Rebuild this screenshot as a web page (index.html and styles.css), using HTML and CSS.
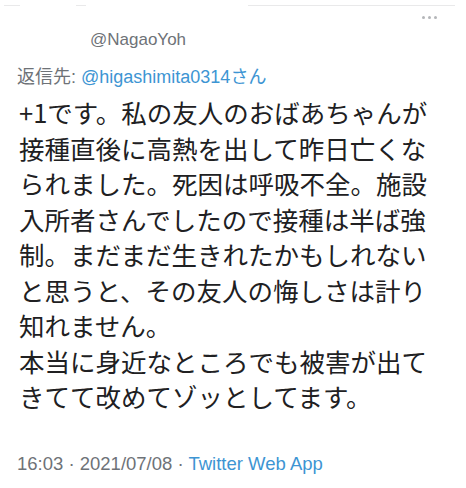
FILE: index.html
```html
<!DOCTYPE html>
<html lang="ja">
<head>
<meta charset="utf-8">
<link rel="stylesheet" href="styles.css">
</head>
<body>
<div class="tweet">
  <div class="topbar">
    <span class="seg seg1"></span>
    <span class="seg seg2"></span>
    <span class="seg seg3"></span>
  </div>
  <div class="menu"><span></span><span></span><span></span></div>
  <div class="handle">@NagaoYoh</div>
  <div class="reply">返信先: <span class="link">@higashimita0314さん</span></div>
  <div class="body">+1です。私の友人のおばあちゃんが<br>接種直後に高熱を出して昨日亡くな<br>られました。死因は呼吸不全。施設<br>入所者さんでしたので接種は半ば強<br>制。まだまだ生きれたかもしれない<br>と思うと、その友人の悔しさは計り<br>知れません。<br>本当に身近なところでも被害が出て<br>きてて改めてゾッとしてます。</div>
  <div class="meta">16:03 · 2021/07/08 · <span class="link">Twitter Web App</span></div>
</div>
</body>
</html>
```

FILE: styles.css
```css
html, body {
  margin: 0;
  padding: 0;
  background: #ffffff;
}
body {
  width: 466px;
  height: 488px;
  overflow: hidden;
  font-family: "Liberation Sans", "Noto Sans CJK JP", sans-serif;
}
.tweet {
  position: relative;
  display: flex;
  flex-direction: column;
  padding: 0 0 0 17px;
}
.topbar {
  position: relative;
  height: 7px;
  margin-left: -17px;
}
.seg {
  position: absolute;
  top: 5px;
  height: 1px;
  background: #e9e9ea;
}
.seg1 { left: 4px; width: 16px; }
.seg2 { left: 76px; width: 10px; }
.seg3 { left: 248px; width: 207px; }
.menu {
  position: absolute;
  top: 16px;
  right: 29px;
  display: flex;
  gap: 3px;
}
.menu span {
  width: 3px;
  height: 3px;
  border-radius: 50%;
  background: #b4b6b9;
}
.handle {
  margin-top: 23px;
  margin-left: 73px;
  font-size: 17px;
  line-height: 20px;
  color: #6e7277;
}
.reply {
  margin-top: 17px;
  font-size: 18px;
  line-height: 20px;
  color: #6e7277;
}
.link {
  color: #3d95d3;
}
.body {
  margin-top: 7px;
  margin-left: 2px;
  font-family: "Noto Sans CJK JP", sans-serif;
  font-size: 25.5px;
  line-height: 35.5px;
  color: #202022;
  white-space: nowrap;
}
.meta {
  margin-top: 40px;
  font-size: 18.5px;
  line-height: 20px;
  color: #6e7277;
}
```
